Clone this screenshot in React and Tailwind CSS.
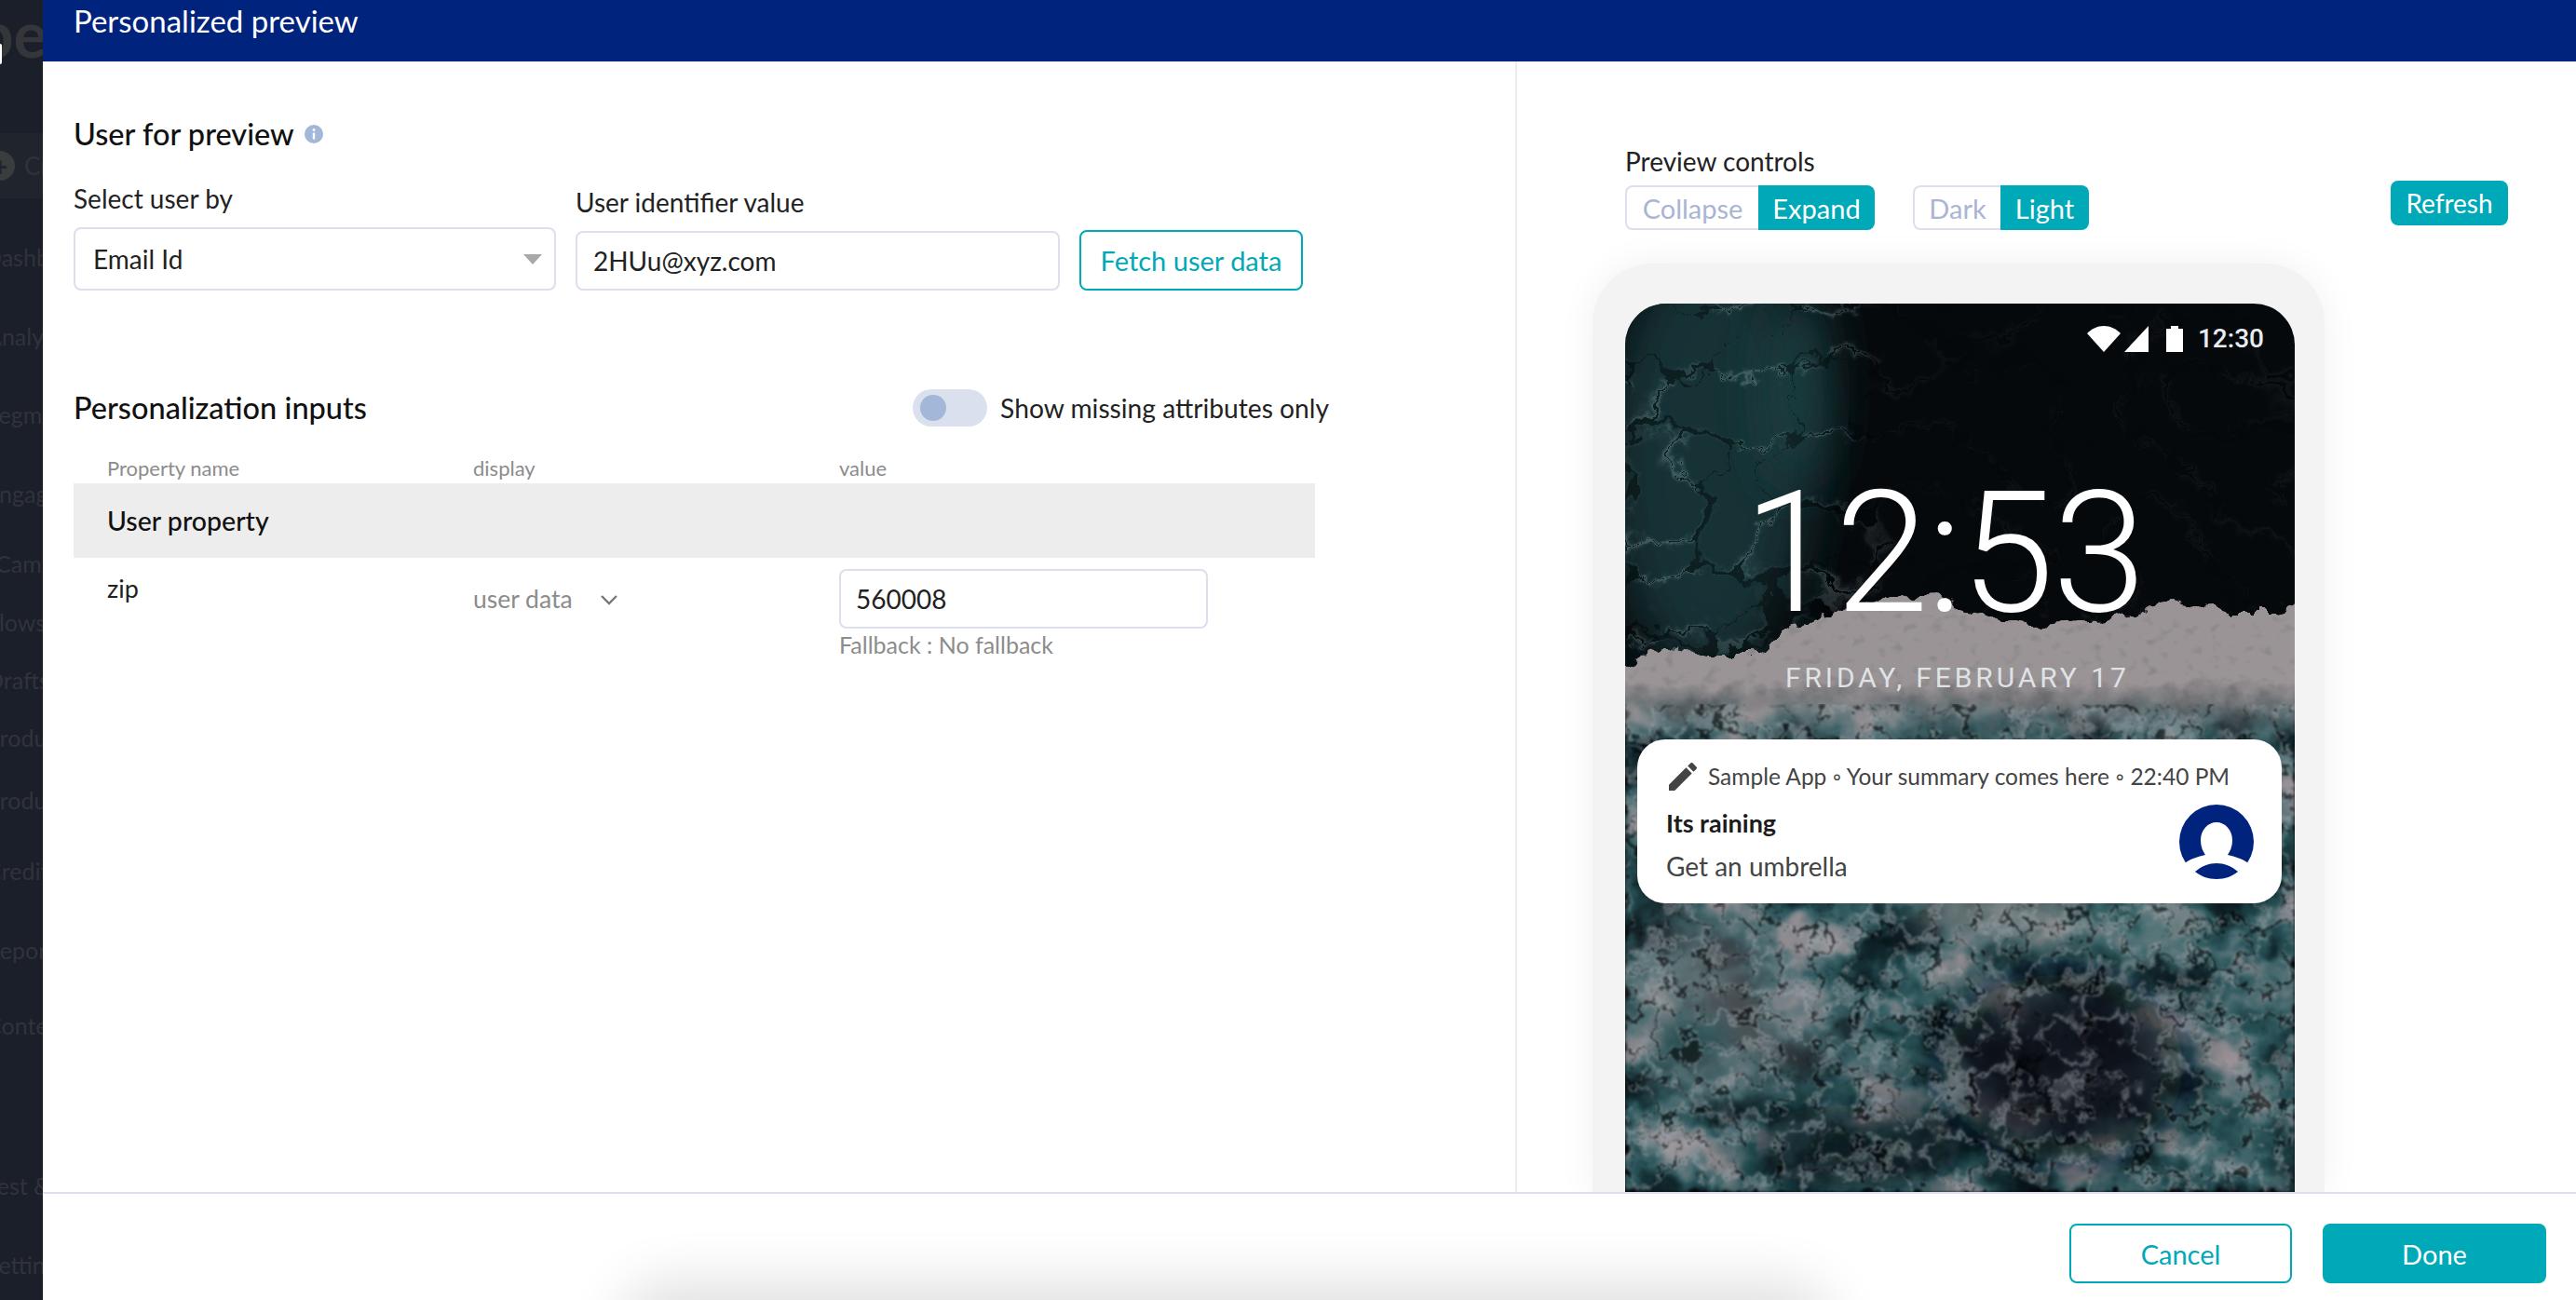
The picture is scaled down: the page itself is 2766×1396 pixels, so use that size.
import React, { useState } from "react";

const TEAL_BG = "bg-[#00a9b8]";

const sideItems = [
  { label: "Dashboard", cls: "mt-[48px] -ml-[17px]" },
  { label: "Analytics", cls: "mt-[55px] -ml-[15px]" },
  { label: "Segments", cls: "mt-[54px] -ml-[15px]" },
  { label: "Engagement", cls: "mt-[55px] -ml-[15px]" },
  { label: "Campaigns", cls: "mt-[45px] -ml-[5px]" },
  { label: "Flows", cls: "mt-[33px] -ml-[15px]" },
  { label: "Drafts", cls: "mt-[32px] -ml-[15px]" },
  { label: "Products", cls: "mt-[32px] -ml-[15px]" },
  { label: "Products", cls: "mt-[37px] -ml-[15px]" },
  { label: "Credits", cls: "mt-[46px] -ml-[15px]" },
  { label: "Reports", cls: "mt-[55px] -ml-[15px]" },
  { label: "Content", cls: "mt-[51px] -ml-[15px]" },
  { label: "Test & Learn", cls: "mt-[142px] -ml-[15px]" },
  { label: "Settings", cls: "mt-[55px] -ml-[15px]" },
];

function Sidebar() {
  return (
    <aside className="relative w-[46px] shrink-0 h-full overflow-hidden bg-[#1b1f2a] text-[#30333a] font-['Lato',sans-serif]">
      <div className="h-[143px] pt-[0px] -ml-[24px] whitespace-nowrap text-[68px] leading-[72px] font-bold text-[#34363a]">pe</div>
      {/* bit of the logo that shows through the overlay */}
      <div className="absolute left-0 top-[47px] w-[2px] h-[22px] rounded-r-full bg-white" />
      <div className="h-[70px] bg-[#20242d] flex items-center -ml-[16px] gap-[10px] whitespace-nowrap">
        <div className="w-[32px] h-[32px] shrink-0 rounded-full bg-[#3a3c3e] flex items-center justify-center text-[#20242d] text-[28px] font-bold leading-none">+</div>
        <span className="text-[26px]">Create</span>
      </div>
      {sideItems.map((it, i) => (
        <div key={i} className={`h-[30px] leading-[30px] text-[25px] whitespace-nowrap ${it.cls}`}>{it.label}</div>
      ))}
    </aside>
  );
}

function Ocean() {
  return (
    <svg className="absolute inset-0 w-full h-full" viewBox="0 0 719 954" preserveAspectRatio="none">
      <defs>
        <filter id="sea" x="0" y="0" width="100%" height="100%" colorInterpolationFilters="sRGB">
          <feTurbulence type="fractalNoise" baseFrequency="0.013 0.017" numOctaves="6" seed="11" result="base" />
          <feColorMatrix in="base" values="1 0 0 0 0 1 0 0 0 0 1 0 0 0 0 0 0 0 0 1" />
          <feComponentTransfer result="col">
            <feFuncR type="table" tableValues="0.03 0.03 0.03 0.04 0.06 0.09 0.14 0.2 0.32 0.46 0.56 0.6 0.6 0.6" />
            <feFuncG type="table" tableValues="0.07 0.07 0.08 0.1 0.14 0.2 0.29 0.36 0.44 0.5 0.55 0.57 0.57 0.57" />
            <feFuncB type="table" tableValues="0.09 0.09 0.1 0.12 0.16 0.22 0.31 0.38 0.46 0.52 0.57 0.59 0.59 0.59" />
          </feComponentTransfer>
          <feTurbulence type="fractalNoise" baseFrequency="0.06" numOctaves="3" seed="31" result="wob" />
          <feDisplacementMap in="col" in2="wob" scale="20" xChannelSelector="R" yChannelSelector="G" />
          <feGaussianBlur stdDeviation="1.6" />
        </filter>
        <filter id="veins" x="0" y="0" width="100%" height="100%" colorInterpolationFilters="sRGB">
          <feTurbulence type="turbulence" baseFrequency="0.011 0.014" numOctaves="1" seed="5" />
          <feColorMatrix values="0 0 0 0 0.6 0 0 0 0 0.72 0 0 0 0 0.74 1 0 0 0 0" />
          <feComponentTransfer result="line">
            <feFuncA type="table" tableValues="0.7 0.12 0 0 0 0 0 0 0 0 0 0 0 0 0 0 0 0 0 0" />
          </feComponentTransfer>
          <feTurbulence type="fractalNoise" baseFrequency="0.05" numOctaves="3" seed="14" result="wob" />
          <feDisplacementMap in="line" in2="wob" scale="30" xChannelSelector="R" yChannelSelector="G" />
          <feGaussianBlur stdDeviation="0.7" />
        </filter>
        <filter id="veinsLow" x="0" y="0" width="100%" height="100%" colorInterpolationFilters="sRGB">
          <feTurbulence type="turbulence" baseFrequency="0.024 0.03" numOctaves="1" seed="23" />
          <feColorMatrix values="0 0 0 0 0.64 0 0 0 0 0.67 0 0 0 0 0.69 1 0 0 0 0" />
          <feComponentTransfer result="line">
            <feFuncA type="table" tableValues="0.8 0.6 0.2 0 0 0 0 0 0 0 0 0 0 0 0 0 0 0 0 0" />
          </feComponentTransfer>
          <feTurbulence type="fractalNoise" baseFrequency="0.06" numOctaves="3" seed="41" result="wob" />
          <feDisplacementMap in="line" in2="wob" scale="36" xChannelSelector="R" yChannelSelector="G" />
          <feGaussianBlur stdDeviation="0.8" />
        </filter>
        <filter id="rough" x="-5%" y="-5%" width="110%" height="110%">
          <feTurbulence type="fractalNoise" baseFrequency="0.05" numOctaves="3" seed="3" result="n" />
          <feDisplacementMap in="SourceGraphic" in2="n" scale="26" xChannelSelector="R" yChannelSelector="G" />
        </filter>
        <filter id="speck" x="0" y="0" width="100%" height="100%" colorInterpolationFilters="sRGB">
          <feTurbulence type="fractalNoise" baseFrequency="0.07 0.09" numOctaves="2" seed="8" />
          <feColorMatrix values="0 0 0 0 0.25 0 0 0 0 0.27 0 0 0 0 0.29 -3 0 0 0 1.25" />
        </filter>
        <filter id="soft" filterUnits="userSpaceOnUse" x="-200" y="-200" width="1200" height="1500"><feGaussianBlur stdDeviation="28" /></filter>
        <filter id="softer" filterUnits="userSpaceOnUse" x="-200" y="-200" width="1200" height="1500"><feGaussianBlur stdDeviation="14" /></filter>
        <linearGradient id="vFade" x1="0" x2="1" y1="0" y2="0">
          <stop offset="0" stopColor="#fff" stopOpacity="0.55" />
          <stop offset="0.3" stopColor="#fff" stopOpacity="0.5" />
          <stop offset="0.42" stopColor="#fff" stopOpacity="0.08" />
          <stop offset="1" stopColor="#fff" stopOpacity="0.1" />
        </linearGradient>
        <linearGradient id="seaFade" x1="0" x2="0" y1="0" y2="1">
          <stop offset="0" stopColor="#fff" stopOpacity="0" />
          <stop offset="0.07" stopColor="#fff" stopOpacity="1" />
        </linearGradient>
        <linearGradient id="foamFade" x1="0" x2="0" y1="0" y2="1">
          <stop offset="0" stopColor="#9a9496" />
          <stop offset="0.6" stopColor="#9a9496" />
          <stop offset="1" stopColor="#9a9496" stopOpacity="0" />
        </linearGradient>
        <linearGradient id="speckFade" x1="0" x2="0" y1="0" y2="1">
          <stop offset="0" stopColor="#fff" stopOpacity="0.22" />
          <stop offset="0.7" stopColor="#fff" stopOpacity="0.22" />
          <stop offset="1" stopColor="#fff" stopOpacity="0" />
        </linearGradient>
        <mask id="vMask"><rect width="719" height="400" fill="url(#vFade)" /></mask>
        <mask id="seaMask"><rect y="400" width="719" height="554" fill="url(#seaFade)" /></mask>
        <mask id="speckMask"><rect y="320" width="719" height="130" fill="url(#speckFade)" /></mask>
      </defs>
      <rect width="719" height="954" fill="#06090c" />
      <ellipse cx="90" cy="170" rx="110" ry="230" fill="#143336" filter="url(#soft)" />
      <ellipse cx="185" cy="90" rx="30" ry="110" fill="#1b4245" filter="url(#soft)" />
      <g mask="url(#vMask)"><rect width="719" height="400" filter="url(#veins)" /></g>
      <g mask="url(#seaMask)"><rect y="400" width="719" height="554" filter="url(#sea)" /></g>
      <path
        d="M-20 392 L46 367 L92 377 L142 377 L184 347 L239 327 L298 310 L349 317 L390 337 L436 343 L528 340 L583 320 L643 333 L698 333 L740 320 L740 470 L-20 470 Z"
        fill="url(#foamFade)"
        filter="url(#rough)"
      />
      <g mask="url(#speckMask)"><rect y="320" width="719" height="130" filter="url(#speck)" /></g>
      {/* large dark and pale areas of the water */}
      <ellipse cx="470" cy="820" rx="130" ry="100" fill="#071015" filter="url(#soft)" opacity="0.85" />
      <ellipse cx="250" cy="905" rx="120" ry="45" fill="#0a1a20" filter="url(#soft)" opacity="0.8" />
      <ellipse cx="85" cy="750" rx="70" ry="90" fill="#8f8a8d" filter="url(#soft)" opacity="0.5" />
      <ellipse cx="400" cy="655" rx="90" ry="28" fill="#98908f" filter="url(#softer)" opacity="0.55" />
      <ellipse cx="170" cy="790" rx="60" ry="30" fill="#8f8a8d" filter="url(#soft)" opacity="0.45" />
      <ellipse cx="560" cy="660" rx="60" ry="40" fill="#3d6e70" filter="url(#soft)" opacity="0.6" />
      <ellipse cx="70" cy="790" rx="45" ry="25" fill="#1a4a4e" filter="url(#softer)" opacity="0.75" />
      <rect y="430" width="719" height="524" filter="url(#veinsLow)" opacity="0.7" />
    </svg>
  );
}

function StatusBar() {
  return (
    <div className="flex justify-end items-center mt-[24px] h-[28px] pr-[33px]">
      <svg width="36" height="28" viewBox="0 0 36 28"><path d="M18 28 L0 8 C5 3 11 0 18 0 C25 0 31 3 36 8 Z" fill="#fff" /></svg>
      <svg width="26" height="28" viewBox="0 0 26 28" className="ml-[4px]"><path d="M26 0 V28 H0 Z" fill="#fff" /></svg>
      <svg width="18" height="28" viewBox="0 0 18 28" className="ml-[19px]"><path d="M0 3 H5 V0 H13 V3 H18 V28 H0 Z" fill="#fff" /></svg>
      <span className="ml-[16px] text-[28px] leading-[28px] font-medium text-[#e8ecee] font-['Roboto',sans-serif]">12:30</span>
    </div>
  );
}

function Notification() {
  return (
    <div className="mt-[46px] ml-[13px] w-[692px] h-[176px] rounded-[30px] bg-white pt-[24px] pl-[31px] pr-[30px] font-['Lato',sans-serif]">
      <div className="flex items-center h-[32px] text-[#444] text-[24.5px] whitespace-nowrap">
        <svg width="40" height="40" viewBox="0 0 24 24" className="-ml-[2px] shrink-0" fill="#444">
          <path d="M3 17.25V21h3.75L17.81 9.94l-3.75-3.75L3 17.25zM20.71 7.04c.39-.39.39-1.02 0-1.41l-2.34-2.34c-.39-.39-1.02-.39-1.41 0l-1.83 1.83 3.75 3.75 1.83-1.83z" />
        </svg>
        <span className="ml-[7px]">Sample App ◦ Your summary comes here ◦ 22:40 PM</span>
      </div>
      <div className="flex justify-between mt-[14px]">
        <div>
          <div className="h-[40px] leading-[40px] text-[27px] font-bold text-[#1c1c1c]">Its raining</div>
          <div className="mt-[6px] h-[40px] leading-[40px] text-[28px] text-[#444]">Get an umbrella</div>
        </div>
        <svg width="80" height="80" viewBox="0 0 80 80" className="shrink-0">
          <circle cx="40" cy="40" r="40" fill="#00237d" />
          <path d="M23 38 C23 27 31 19 40 19 C49 19 57 27 57 38 C57 46 54 51 52 54 C60 56 68 58 74 63 L80 80 L0 80 L6 63 C12 58 20 56 28 54 C26 51 23 46 23 38 Z" fill="#fff" />
          <path d="M17 72 C24 66 32 63 40 63 C48 63 56 66 63 72 C57 77 49 80 40 80 C31 80 23 77 17 72 Z" fill="#00237d" />
        </svg>
      </div>
    </div>
  );
}

function Phone() {
  return (
    <div className="-ml-[35px] mt-[36px] w-[786px] flex-1 min-h-0 rounded-t-[64px] bg-[#f3f3f4] pt-[43px] px-[35px] shadow-[0_0_40px_rgba(0,0,0,0.06)]">
      <div className="relative w-[719px] h-full overflow-hidden rounded-t-[44px] flex flex-col">
        <Ocean />
        <div className="relative flex flex-col">
          <StatusBar />
          <div className="mt-[126px] pl-[127px] h-[181px] leading-[181px] text-[181px] font-light tracking-[-0.01em] text-white font-['Roboto',sans-serif] whitespace-nowrap">12:53</div>
          <div className="mt-[23px] pl-[172px] h-[40px] leading-[40px] text-[30px] tracking-[3.9px] text-[#dfe3e6] font-['Roboto',sans-serif] whitespace-nowrap">FRIDAY, FEBRUARY 17</div>
          <Notification />
        </div>
      </div>
    </div>
  );
}

function Segment({ off, on, offW, onW }) {
  return (
    <div className="flex h-[48px] text-[29px] leading-none">
      <div className={`${offW} flex items-center justify-center border-2 border-r-0 border-[#dcdfee] rounded-l-[8px] text-[#a9b5d3]`}>{off}</div>
      <div className={`${onW} ${TEAL_BG} flex items-center justify-center rounded-r-[8px] text-white`}>{on}</div>
    </div>
  );
}

function PreviewPanel() {
  return (
    <div className="flex-1 min-w-0 h-full overflow-hidden flex flex-col pl-[116px]">
      <div className="flex mt-[89px] pr-[73px]">
        <div>
          <div className="h-[36px] leading-[36px] text-[28px] text-[#222]">Preview controls</div>
          <div className="flex gap-[41px] mt-[8px]">
            <Segment off="Collapse" on="Expand" offW="w-[143px]" onW="w-[125px]" />
            <Segment off="Dark" on="Light" offW="w-[94px]" onW="w-[95px]" />
          </div>
        </div>
        <button className={`ml-auto mt-[39px] w-[126px] h-[48px] rounded-[8px] ${TEAL_BG} text-white text-[28px] leading-none`}>Refresh</button>
      </div>
      <Phone />
    </div>
  );
}

function UserForm() {
  return (
    <div className="flex items-end mt-[29px]">
      <div className="w-[518px]">
        <div className="h-[36px] leading-[36px] text-[28px] text-[#222]">Select user by</div>
        <div className="mt-[13px] h-[68px] border-2 border-[#dcdfee] rounded-[8px] flex items-center justify-between pl-[19px] pr-[13px] text-[28px] text-[#222]">
          <span>Email Id</span>
          <span className="w-0 h-0 border-x-[10px] border-x-transparent border-t-[11px] border-t-[#a9a9a9]" />
        </div>
      </div>
      <div className="w-[520px] ml-[21px]">
        <div className="h-[36px] leading-[36px] text-[28px] text-[#222]">User identifier value</div>
        <div className="mt-[13px] h-[64px] border-2 border-[#dcdfee] rounded-[8px] flex items-center pl-[17px] text-[28px] text-[#222]">2HUu@xyz.com</div>
      </div>
      <button className="ml-[21px] w-[240px] h-[65px] border-2 border-[#00a9b8] rounded-[8px] text-[#00a9b8] text-[29px] leading-none">Fetch user data</button>
    </div>
  );
}

function InputsTable() {
  const [missingOnly, setMissingOnly] = useState(false);
  return (
    <div>
      <div className="flex items-center justify-between w-[1348px] mt-[106px] h-[40px]">
        <div className="text-[32.5px] font-medium text-[#111]">Personalization inputs</div>
        <div className="flex items-center gap-[14px]">
          <button onClick={() => setMissingOnly(!missingOnly)} className="w-[80px] h-[40px] rounded-full bg-[#dae0ee] flex items-center pl-[8px]">
            <span className="w-[28px] h-[28px] rounded-full bg-[#a3b7d9]" />
          </button>
          <span className="text-[28.2px] text-[#222]">Show missing attributes only</span>
        </div>
      </div>
      <div className="w-[1333px] mt-[22px]">
        <div className="grid grid-cols-[393px_393px_1fr] pl-[36px] h-[39px] pt-[6px] items-center text-[22px] text-[#8c8c8c]">
          <span>Property name</span>
          <span>display</span>
          <span>value</span>
        </div>
        <div className="h-[80px] bg-[#ededed] pl-[36px] flex items-center text-[28.5px] font-medium text-[#111]">User property</div>
        <div className="grid grid-cols-[393px_393px_1fr] pl-[36px] pt-[12px]">
          <div className="pt-[6px] h-[36px] leading-[30px] text-[27px] text-[#222]">zip</div>
          <div className="pt-[2px] flex items-center h-[64px] text-[26.5px] text-[#8c8c8c]">
            <span>user data</span>
            <svg width="20" height="12" viewBox="0 0 20 12" className="ml-[29px]" fill="none" stroke="#777" strokeWidth="2.4"><path d="M2 2 L10 10 L18 2" /></svg>
          </div>
          <div>
            <div className="w-[396px] h-[64px] border-2 border-[#dcdfee] rounded-[8px] flex items-center pl-[16px] text-[28px] text-[#222]">560008</div>
            <div className="mt-[2px] h-[30px] leading-[30px] text-[25px] text-[#8c8c8c]">Fallback : No fallback</div>
          </div>
        </div>
      </div>
    </div>
  );
}

function Footer() {
  return (
    <footer className="relative h-[116px] shrink-0 overflow-hidden border-t-2 border-[#dcdfee] bg-white flex justify-end gap-[33px] pt-[32px] pr-[32px] font-['Lato',sans-serif]">
      {/* shadow of something under the dialog */}
      <div className="absolute left-[640px] bottom-[-60px] w-[1260px] h-[60px] rounded-[30px] shadow-[0_0_60px_20px_rgba(0,0,0,0.12)]" />
      <button className="relative w-[239px] h-[64px] border-2 border-[#00a9b8] rounded-[8px] text-[#00a9b8] text-[29px] leading-none">Cancel</button>
      <button className={`relative w-[240px] h-[64px] rounded-[8px] ${TEAL_BG} text-white text-[29px] leading-none`}>Done</button>
    </footer>
  );
}

export default function App() {
  return (
    <div className="w-[2766px] h-[1396px] flex overflow-hidden bg-white font-['Lato',sans-serif]">
      <Sidebar />
      <main className="flex-1 min-w-0 flex flex-col">
        <header className="h-[66px] shrink-0 bg-[#00237d] pl-[33px] text-white text-[33px] leading-[44px]">Personalized preview</header>
        <div className="flex-1 min-h-0 flex">
          <section className="w-[1583px] shrink-0 border-r-2 border-[#ececec] pl-[33px] pt-[56px]">
            <div className="flex items-center h-[44px]">
              <h2 className="text-[32.5px] font-medium text-[#111]">User for preview</h2>
              <svg width="20" height="20" viewBox="0 0 20 20" className="ml-[11px]">
                <circle cx="10" cy="10" r="10" fill="#a3b7d9" />
                <circle cx="10" cy="5.5" r="1.4" fill="#fff" />
                <rect x="8.8" y="8.5" width="2.4" height="7" fill="#fff" />
              </svg>
            </div>
            <UserForm />
            <InputsTable />
          </section>
          <PreviewPanel />
        </div>
        <Footer />
      </main>
    </div>
  );
}
